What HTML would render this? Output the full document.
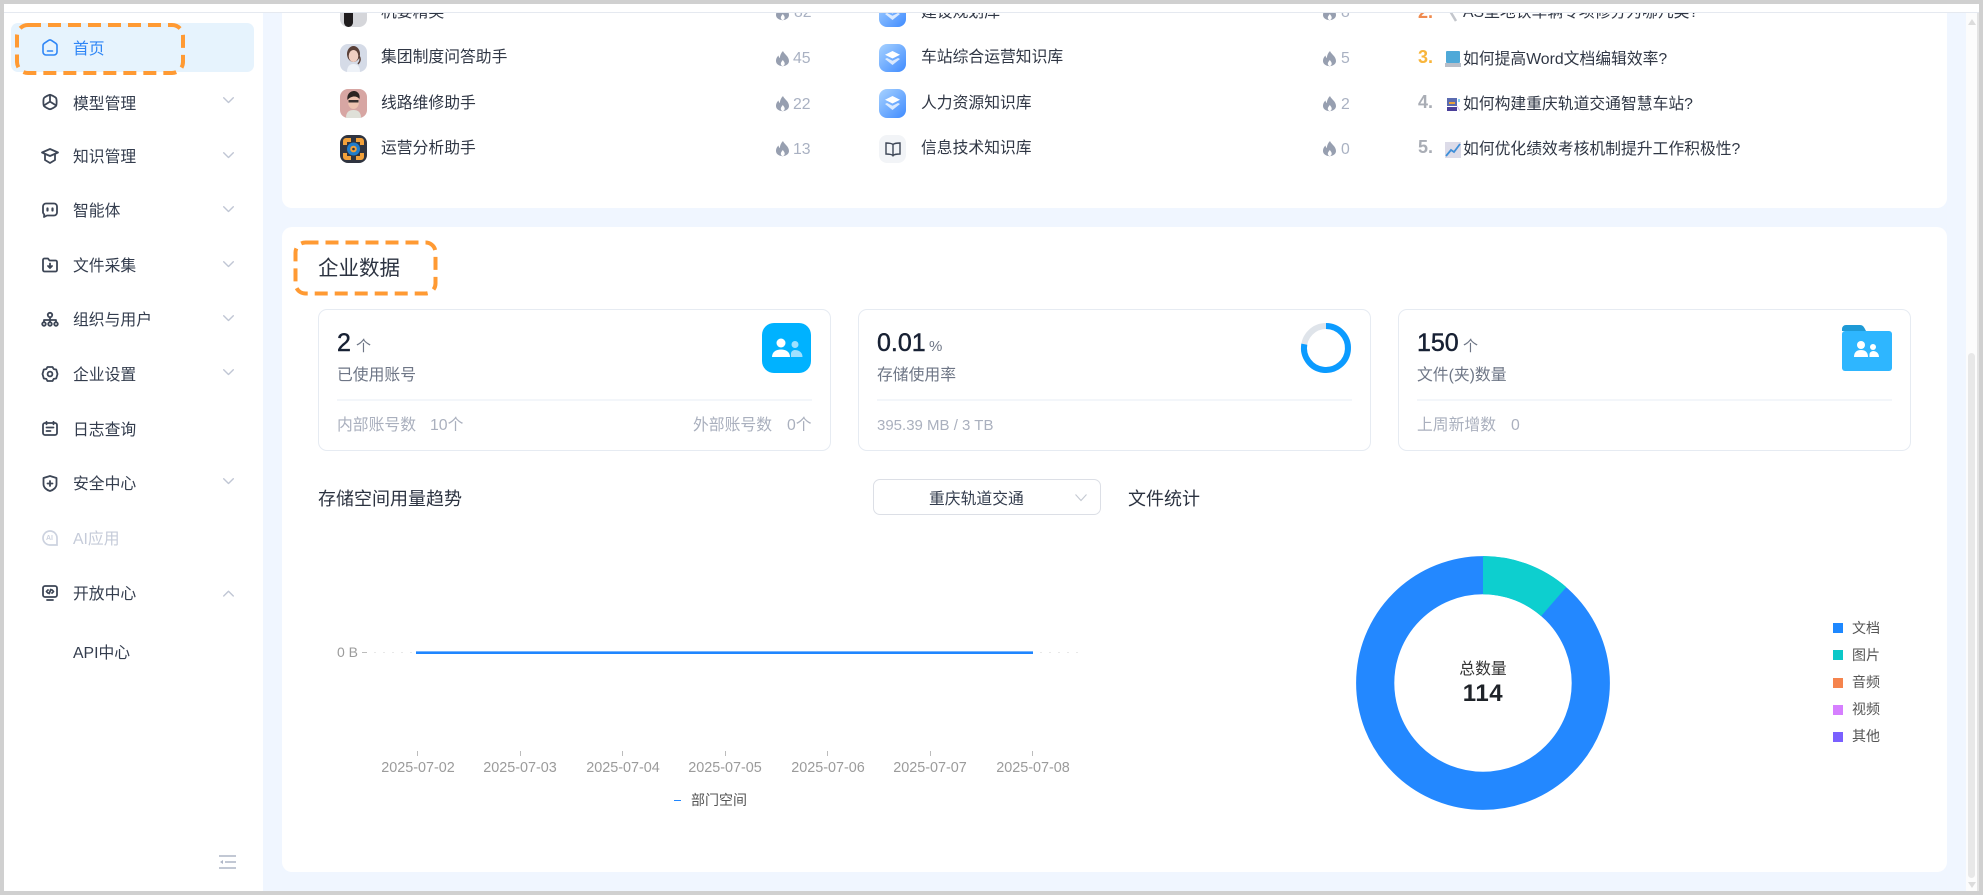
<!DOCTYPE html>
<html lang="zh">
<head>
<meta charset="utf-8">
<title>企业数据</title>
<style>
*{box-sizing:border-box;margin:0;padding:0}
html,body{width:1983px;height:895px;overflow:hidden;background:#d0d0d0}
body{position:relative;font-family:"Liberation Sans","Noto Sans CJK SC",sans-serif;color:#2b3240}
.a{position:absolute;white-space:nowrap}
.t{position:absolute;white-space:nowrap;height:24px;line-height:24px;font-size:15.8px;margin-top:1px}
svg{position:absolute;display:block;overflow:visible}
.t.menu{color:#333c4d;margin-top:2px}
.t.s{margin-top:2px}
.ic{fill:none;stroke:#3d4656;stroke-width:1.8;stroke-linecap:round;stroke-linejoin:round}
.chev{fill:none;stroke:#c0c6d4;stroke-width:1.4;stroke-linecap:round;stroke-linejoin:round}
.card{position:absolute;background:#fff;border:1px solid #e6ebf2;border-radius:9px;top:309px;height:142px;width:513px}
.g{color:#aab0be}
.s{color:#6e7686}
.row{color:#2f3644}
.num{color:#a9b1c2}
.big{position:absolute;white-space:nowrap;top:326px;font-size:25px;font-weight:500;line-height:34px;color:#172033;-webkit-text-stroke:.45px #172033}
.unit{position:absolute;white-space:nowrap;top:336px;font-size:15px;line-height:22px;color:#6e7686}
.rank{position:absolute;font-weight:700;font-size:18px;line-height:24px;height:24px}
.cl{fill:#979fb0}
.lg{position:absolute;left:1852px;font-size:14px;line-height:20px;height:20px;color:#555;white-space:nowrap}
.sq{position:absolute;left:1833px;width:10px;height:10px}
.xl{position:absolute;top:758px;width:80px;text-align:center;font-size:14.4px;line-height:20px;color:#9b9b9b;white-space:nowrap}
.xt{position:absolute;top:751px;width:1px;height:5px;background:#bcbcbc}
</style>
</head>
<body>
<!-- frame -->
<div class="a" style="left:4px;top:4px;width:1975px;height:887px;background:#f0f6ff"></div>
<!-- sidebar -->
<div class="a" style="left:4px;top:12px;width:259px;height:879px;background:#fff"></div>
<!-- cards -->
<div class="a" style="left:282px;top:12px;width:1665px;height:196px;background:#fff;border-radius:0 0 10px 10px"></div>
<div class="a" style="left:282px;top:227px;width:1665px;height:645px;background:#fff;border-radius:10px"></div>
<!-- scrollbar -->
<div class="a" style="left:1966px;top:12px;width:11px;height:879px;background:#fcfcfc"></div>
<div class="a" style="left:1968px;top:353px;width:7px;height:525px;background:#e8e8e8;border-radius:4px"></div>
<div class="a" style="left:1977px;top:4px;width:2px;height:887px;background:#e4e4e4"></div>
<svg style="left:1968px;top:19px" width="8" height="6"><path d="M0 6L4 0L8 6Z" fill="#dcdcdc"/></svg>
<svg style="left:1968px;top:882px" width="8" height="6"><path d="M0 0L4 6L8 0Z" fill="#dcdcdc"/></svg>

<!-- sidebar items -->
<div class="a" style="left:11px;top:23px;width:243px;height:49px;background:#e6f3fd;border-radius:7px"></div>
<svg class="a" style="left:13px;top:21px" width="175" height="55"><rect x="4" y="4" width="166" height="48" rx="11" fill="none" stroke="#ff9a33" stroke-width="4" stroke-dasharray="13 7"/></svg>

<svg style="left:42px;top:39px" width="16" height="17" viewBox="0 0 16 17"><path d="M1 6.500C1 5.500 1.500 4.800 2.200 4.300L6.500 1.400c1-.6 2-.6 3 0l4.300 2.900c.7.500 1.200 1.200 1.200 2.200V13a3 3 0 0 1-3 3H4a3 3 0 0 1-3-3z" fill="none" stroke="#2f86f6" stroke-width="1.600" stroke-linejoin="round"/><path d="M5.500 12h5" stroke="#2f86f6" stroke-width="1.600" stroke-linecap="round"/></svg>
<div class="t menu" style="left:73px;top:36px;color:#2f86f6">首页</div>

<svg class="ic" style="left:42px;top:94px" width="16" height="16" viewBox="0 0 16 16"><path d="M8 .8c1 0 5 2 6 3.200.8 1 .8 7 0 8-1 1.200-5 3.200-6 3.200s-5-2-6-3.200c-.8-1-.8-7 0-8C3 2.800 7 .8 8 .8z"/><path d="M8 1v6.600M8 7.600L2 11.400M8 7.600l6 3.800"/></svg>
<div class="t menu" style="left:73px;top:91px">模型管理</div>
<svg class="chev" style="left:223px;top:97px" width="11" height="7"><path d="M.7.7L5.500 5.500 10.300.7"/></svg>

<svg class="ic" style="left:41px;top:148px" width="18" height="16" viewBox="0 0 18 16"><path d="M1 4.500L9 1l8 3.500-8 3.500z"/><path d="M4 6.500V12l5 3 5-3V6.500"/></svg>
<div class="t menu" style="left:73px;top:144px">知识管理</div>
<svg class="chev" style="left:223px;top:152px" width="11" height="7"><path d="M.7.7L5.500 5.500 10.300.7"/></svg>

<svg class="ic" style="left:41px;top:202px" width="18" height="16" viewBox="0 0 18 16"><path d="M5 1.500h8a3 3 0 0 1 3 3v6a3 3 0 0 1-3 3H6l-3 1.500.3-2.500A3 3 0 0 1 2 10.500v-6a3 3 0 0 1 3-3z"/><path d="M6.500 6.500v2M11.500 6.500v2" stroke-width="2.200"/></svg>
<div class="t menu" style="left:73px;top:198px">智能体</div>
<svg class="chev" style="left:223px;top:206px" width="11" height="7"><path d="M.7.7L5.500 5.500 10.300.7"/></svg>

<svg class="ic" style="left:42px;top:257px" width="16" height="16" viewBox="0 0 16 16"><path d="M1 3a1.500 1.500 0 0 1 1.500-1.500H6l1.500 2h6A1.500 1.500 0 0 1 15 5v8a1.500 1.500 0 0 1-1.500 1.500h-11A1.500 1.500 0 0 1 1 13z"/><path d="M8 6.500v4M6 9l2 2 2-2"/></svg>
<div class="t menu" style="left:73px;top:253px">文件采集</div>
<svg class="chev" style="left:223px;top:261px" width="11" height="7"><path d="M.7.7L5.500 5.500 10.300.7"/></svg>

<svg class="ic" style="left:41px;top:312px" width="18" height="15" viewBox="0 0 18 15"><circle cx="9" cy="3" r="2.200"/><circle cx="3" cy="12" r="1.800"/><circle cx="9" cy="12" r="1.800"/><circle cx="15" cy="12" r="1.800"/><path d="M9 5.500v4.500M3 9.800V8h12v1.800"/></svg>
<div class="t menu" style="left:73px;top:307px">组织与用户</div>
<svg class="chev" style="left:223px;top:315px" width="11" height="7"><path d="M.7.7L5.500 5.500 10.300.7"/></svg>

<svg class="ic" style="left:42px;top:366px" width="16" height="16" viewBox="0 0 16 16"><path d="M5.500 1h5l1.200 2.100 2.500.4L15.500 8l-1.300 4.500-2.500.4L10.500 15h-5l-1.200-2.100-2.500-.4L.5 8l1.300-4.500 2.500-.4z"/><circle cx="8" cy="8" r="2.400"/></svg>
<div class="t menu" style="left:73px;top:362px">企业设置</div>
<svg class="chev" style="left:223px;top:369px" width="11" height="7"><path d="M.7.7L5.500 5.500 10.300.7"/></svg>

<svg class="ic" style="left:42px;top:421px" width="16" height="15" viewBox="0 0 16 15"><rect x="1" y="2" width="14" height="12" rx="2"/><path d="M4.500.8v2.500M11.500.8v2.500M4.500 6.500h7M4.500 10h4"/></svg>
<div class="t menu" style="left:73px;top:417px">日志查询</div>

<svg class="ic" style="left:42px;top:475px" width="16" height="17" viewBox="0 0 16 17"><path d="M8 1l6.500 2v6c0 3.500-3 6-6.500 7-3.500-1-6.500-3.500-6.500-7V3z"/><path d="M8 6v5M5.500 8.500h5"/></svg>
<div class="t menu" style="left:73px;top:471px">安全中心</div>
<svg class="chev" style="left:223px;top:478px" width="11" height="7"><path d="M.7.7L5.500 5.500 10.300.7"/></svg>

<svg style="left:42px;top:530px" width="16" height="16" viewBox="0 0 16 16" fill="none" stroke="#ccd2df" stroke-width="1.700"><path d="M8 1a7 7 0 1 0 0 14h7V8a7 7 0 0 0-7-7z"/></svg>
<div class="a" style="left:46px;top:534px;font-size:7px;font-weight:700;line-height:9px;color:#ccd2df">AI</div>
<div class="t menu" style="left:73px;top:526px;color:#c5cbd9">AI应用</div>

<svg class="ic" style="left:42px;top:585px" width="16" height="16" viewBox="0 0 16 16"><rect x="1" y="1" width="14" height="11" rx="2"/><path d="M5 15h6M6 5L4.500 6.500 6 8M10 5l1.500 1.500L10 8M8.700 4.500L7.300 8.500"/></svg>
<div class="t menu" style="left:73px;top:581px">开放中心</div>
<svg class="chev" style="left:223px;top:590px" width="11" height="7"><path d="M.7 6L5.500 1.200 10.300 6"/></svg>

<div class="t menu" style="left:73px;top:640px">API中心</div>

<svg style="left:219px;top:855px" width="17" height="14" viewBox="0 0 17 14" fill="none" stroke="#aeb5c6" stroke-width="1.500"><path d="M0 1h17M6 7h11M0 13h17"/><path d="M4 5v4L1 7z" fill="#aeb5c6" stroke="none"/></svg>

<!-- clipped top list -->
<div class="a" style="left:282px;top:13px;width:1665px;height:40px;overflow:hidden">
  <div class="a" style="top:-14px;left:58px;width:27px;height:28px;border-radius:8px;background:#d5d6da"></div>
  <div class="a" style="top:-11px;left:62px;width:9px;height:25px;border-radius:5px;background:#1f1c1d"></div>
  <div class="a" style="top:-12px;left:99px;font-size:15.8px;line-height:24px;color:#2f3644">机要精英</div>
  <svg style="left:494px;top:-8px" width="13" height="15" viewBox="0 0 13 15"><path class="cl" d="M7 0c1 3 6 5.200 6 10A6.500 5.200 0 0 1 0 10C0 7.500 1.200 5.700 2.500 4.500c.2 1.200.6 2 1.300 2.500C4 4.200 5 2 7 0z"/><path fill="#fff" d="M6.800 9c-1 1.300-2 2.400-2 3.700 0 1 .9 2.300 1.900 2.300s2-1.300 2-2.300C8.700 11.400 7.800 10.300 6.800 9z"/></svg>
  <div class="a num" style="left:512px;top:-12px;font-size:15.8px;line-height:24px">82</div>

  <div class="a" style="top:-14px;left:597px;width:27px;height:28px;border-radius:8px;background:linear-gradient(135deg,#a8d2ff,#3f8bff)"></div>
  <svg style="left:603px;top:-7px" width="15" height="14" viewBox="0 0 15 14"><path d="M7.500 0L15 3.700 7.500 7.500 0 3.700z" fill="#fff"/><path d="M2 7l5.500 2.700L13 7l2 1-7.500 6L0 8z" fill="#fff" opacity=".75"/></svg>
  <div class="a" style="top:-12px;left:639px;font-size:15.8px;line-height:24px;color:#2f3644">建设规划库</div>
  <svg style="left:1041px;top:-8px" width="13" height="15" viewBox="0 0 13 15"><path class="cl" d="M7 0c1 3 6 5.200 6 10A6.500 5.200 0 0 1 0 10C0 7.500 1.200 5.700 2.500 4.500c.2 1.200.6 2 1.300 2.500C4 4.200 5 2 7 0z"/><path fill="#fff" d="M6.800 9c-1 1.300-2 2.400-2 3.700 0 1 .9 2.300 1.900 2.300s2-1.300 2-2.300C8.700 11.400 7.800 10.300 6.800 9z"/></svg>
  <div class="a num" style="left:1059px;top:-12px;font-size:15.8px;line-height:24px">8</div>

  <div class="rank" style="left:1136px;top:-13px;color:#ef8a4e">2.</div>
  <svg style="left:1163px;top:-9px" width="14" height="18" viewBox="0 0 14 18"><path d="M2 2l9 15" stroke="#c3c6cc" stroke-width="2.500" fill="none"/></svg>
  <div class="a" style="left:1181px;top:-12px;font-size:15.8px;line-height:24px;color:#2f3644">AS型地铁车辆专项修分为哪几类?</div>
</div>
<div class="a" style="left:4px;top:4px;width:1975px;height:8px;background:#fff"></div>
<div class="a" style="left:4px;top:12px;width:1975px;height:1px;background:#e5e9f0"></div>
<div class="a" style="left:0;top:0;width:1983px;height:4px;background:#d0d0d0"></div>

<!-- row avatars col 1 -->
<svg style="left:340px;top:44px" width="27" height="28" viewBox="0 0 27 28"><rect width="27" height="28" rx="8" fill="#d5dbe7"/><path d="M7 28c0-6 3-8 6.500-8S20 22 20 28z" fill="#eef2f8"/><ellipse cx="13.500" cy="10" rx="6.500" ry="8" fill="#5a4038"/><ellipse cx="13.500" cy="12" rx="4.800" ry="6" fill="#f0cfc2"/><path d="M19 12c2 3 1 6-1 8" stroke="#5a4038" stroke-width="1.500" fill="none"/></svg>
<div class="t row" style="left:381px;top:45px">集团制度问答助手</div>
<svg style="left:340px;top:89px" width="27" height="29" viewBox="0 0 27 29"><rect width="27" height="29" rx="8" fill="#d7a6a3"/><path d="M6 29c0-6 3-8 7.500-8S21 23 21 29z" fill="#dfe0d8"/><ellipse cx="13.500" cy="13" rx="5.500" ry="7" fill="#eec3b0"/><path d="M7.500 11c-1-7 4-9 6.500-9s6.500 2 5.500 8c-2-3-8-4-12 1z" fill="#2b2422"/><rect x="8.500" y="11" width="10" height="2.500" fill="#3a3030"/></svg>
<div class="t row" style="left:381px;top:91px">线路维修助手</div>
<svg style="left:340px;top:135px" width="27" height="28" viewBox="0 0 27 28"><rect width="27" height="28" rx="8" fill="#2f3440"/><path d="M3 10V6a3 3 0 0 1 3-3h5v4H7v3zM24 10V6a3 3 0 0 0-3-3h-5v4h4v3zM3 18v4a3 3 0 0 0 3 3h5v-4H7v-3zM24 18v4a3 3 0 0 1-3 3h-5v-4h4v-3z" fill="#f2a13a"/><circle cx="13.500" cy="14" r="6.500" fill="#1f7dcc"/><circle cx="13.500" cy="14" r="3.300" fill="#f2a13a"/><circle cx="13.500" cy="14" r="1.300" fill="#2f3440"/></svg>
<div class="t row" style="left:381px;top:136px">运营分析助手</div>

<svg style="left:776px;top:51px" width="13" height="15" viewBox="0 0 13 15"><path class="cl" d="M7 0c1 3 6 5.200 6 10A6.500 5.200 0 0 1 0 10C0 7.500 1.200 5.700 2.500 4.500c.2 1.200.6 2 1.300 2.500C4 4.200 5 2 7 0z"/><path fill="#fff" d="M6.800 9c-1 1.300-2 2.400-2 3.700 0 1 .9 2.300 1.900 2.300s2-1.300 2-2.300C8.700 11.400 7.800 10.300 6.800 9z"/></svg>
<div class="t num" style="left:793px;top:46px">45</div>
<svg style="left:776px;top:96px" width="13" height="15" viewBox="0 0 13 15"><path class="cl" d="M7 0c1 3 6 5.200 6 10A6.500 5.200 0 0 1 0 10C0 7.500 1.200 5.700 2.500 4.500c.2 1.200.6 2 1.300 2.500C4 4.200 5 2 7 0z"/><path fill="#fff" d="M6.800 9c-1 1.300-2 2.400-2 3.700 0 1 .9 2.300 1.900 2.300s2-1.300 2-2.300C8.700 11.400 7.800 10.300 6.800 9z"/></svg>
<div class="t num" style="left:793px;top:92px">22</div>
<svg style="left:776px;top:141px" width="13" height="15" viewBox="0 0 13 15"><path class="cl" d="M7 0c1 3 6 5.200 6 10A6.500 5.200 0 0 1 0 10C0 7.500 1.200 5.700 2.500 4.500c.2 1.200.6 2 1.300 2.500C4 4.200 5 2 7 0z"/><path fill="#fff" d="M6.800 9c-1 1.300-2 2.400-2 3.700 0 1 .9 2.300 1.900 2.300s2-1.300 2-2.300C8.700 11.400 7.800 10.300 6.800 9z"/></svg>
<div class="t num" style="left:793px;top:137px">13</div>

<!-- col 2 -->
<div class="a" style="left:879px;top:44px;width:27px;height:28px;border-radius:8px;background:linear-gradient(135deg,#a8d2ff,#3f8bff)"></div>
<svg style="left:885px;top:51px" width="15" height="14" viewBox="0 0 15 14"><path d="M7.500 0L15 3.700 7.500 7.500 0 3.700z" fill="#fff"/><path d="M2 7l5.500 2.700L13 7l2 1-7.500 6L0 8z" fill="#fff" opacity=".75"/></svg>
<div class="t row" style="left:921px;top:45px">车站综合运营知识库</div>
<div class="a" style="left:879px;top:89px;width:27px;height:29px;border-radius:8px;background:linear-gradient(135deg,#a8d2ff,#3f8bff)"></div>
<svg style="left:885px;top:96px" width="15" height="14" viewBox="0 0 15 14"><path d="M7.500 0L15 3.700 7.500 7.500 0 3.700z" fill="#fff"/><path d="M2 7l5.500 2.700L13 7l2 1-7.500 6L0 8z" fill="#fff" opacity=".75"/></svg>
<div class="t row" style="left:921px;top:91px">人力资源知识库</div>
<div class="a" style="left:879px;top:135px;width:27px;height:28px;border-radius:8px;background:#f2f4f7"></div>
<svg style="left:885px;top:142px" width="16" height="15" viewBox="0 0 16 15" fill="none" stroke="#3d4656" stroke-width="1.400"><path d="M8 2.500C6.500 1 3.500 1 1 1v11c2.500 0 5.500 0 7 1.500 1.500-1.500 4.500-1.500 7-1.500V1c-2.500 0-5.500 0-7 1.500zM8 2.500v12"/></svg>
<div class="t row" style="left:921px;top:136px">信息技术知识库</div>

<svg style="left:1323px;top:51px" width="13" height="15" viewBox="0 0 13 15"><path class="cl" d="M7 0c1 3 6 5.200 6 10A6.500 5.200 0 0 1 0 10C0 7.500 1.200 5.700 2.500 4.500c.2 1.200.6 2 1.300 2.500C4 4.200 5 2 7 0z"/><path fill="#fff" d="M6.800 9c-1 1.300-2 2.400-2 3.700 0 1 .9 2.300 1.900 2.300s2-1.300 2-2.300C8.700 11.400 7.800 10.300 6.800 9z"/></svg>
<div class="t num" style="left:1341px;top:46px">5</div>
<svg style="left:1323px;top:96px" width="13" height="15" viewBox="0 0 13 15"><path class="cl" d="M7 0c1 3 6 5.200 6 10A6.500 5.200 0 0 1 0 10C0 7.500 1.200 5.700 2.500 4.500c.2 1.200.6 2 1.300 2.500C4 4.200 5 2 7 0z"/><path fill="#fff" d="M6.800 9c-1 1.300-2 2.400-2 3.700 0 1 .9 2.300 1.900 2.300s2-1.300 2-2.300C8.700 11.400 7.800 10.300 6.800 9z"/></svg>
<div class="t num" style="left:1341px;top:92px">2</div>
<svg style="left:1323px;top:141px" width="13" height="15" viewBox="0 0 13 15"><path class="cl" d="M7 0c1 3 6 5.200 6 10A6.500 5.200 0 0 1 0 10C0 7.500 1.200 5.700 2.500 4.500c.2 1.200.6 2 1.300 2.500C4 4.200 5 2 7 0z"/><path fill="#fff" d="M6.800 9c-1 1.300-2 2.400-2 3.700 0 1 .9 2.300 1.900 2.300s2-1.300 2-2.300C8.700 11.400 7.800 10.300 6.800 9z"/></svg>
<div class="t num" style="left:1341px;top:137px">0</div>

<!-- col 3 -->
<div class="rank" style="left:1418px;top:45px;color:#f8b53b">3.</div>
<svg style="left:1445px;top:51px" width="16" height="16" viewBox="0 0 16 16"><rect x="1" y="0" width="14" height="12" rx="1" fill="#4fa9d8"/><rect x="0" y="12" width="16" height="4" fill="#b9bec8"/></svg>
<div class="t row" style="left:1463px;top:47px">如何提高Word文档编辑效率?</div>
<div class="rank" style="left:1418px;top:90px;color:#a9adb5">4.</div>
<svg style="left:1446px;top:97px" width="15" height="15" viewBox="0 0 15 15"><rect x="1" y="1" width="10" height="8" fill="#5b6bb0"/><rect x="1" y="10" width="10" height="4" fill="#4a3f9a"/><rect x="3" y="5" width="6" height="2" fill="#e8a23b"/><rect x="12" y="2" width="2" height="3" fill="#8ed0f0"/><path d="M11 9l3 5" stroke="#d8c8f0"/></svg>
<div class="t row" style="left:1463px;top:92px">如何构建重庆轨道交通智慧车站?</div>
<div class="rank" style="left:1418px;top:135px;color:#a9adb5">5.</div>
<svg style="left:1445px;top:142px" width="16" height="16" viewBox="0 0 16 16"><rect width="16" height="16" fill="#dcdbe8"/><path d="M1 14l5-6 3 2 6-8" fill="none" stroke="#3f8fd8" stroke-width="1.800"/></svg>
<div class="t row" style="left:1463px;top:137px">如何优化绩效考核机制提升工作积极性?</div>

<!-- heading -->
<svg style="left:292px;top:239px" width="147" height="58"><rect x="3.500" y="3.500" width="140" height="51" rx="10" fill="none" stroke="#ff9a33" stroke-width="4" stroke-dasharray="13 7"/></svg>
<div class="a" style="left:318px;top:254px;font-size:20.5px;line-height:30px;color:#2b3240">企业数据</div>

<!-- stat cards -->
<div class="card" style="left:318px"></div>
<div class="card" style="left:858px"></div>
<div class="card" style="left:1398px"></div>

<div class="big" style="left:337px">2</div>
<div class="unit" style="left:356px">个</div>
<div class="t s" style="left:337px;top:362px">已使用账号</div>
<div class="a" style="left:337px;top:399px;width:475px;height:2px;background:#f3f6fa"></div>
<div class="t g" style="left:337px;top:413px">内部账号数</div>
<div class="t g" style="left:430px;top:413px">10个</div>
<div class="t g" style="left:693px;top:413px">外部账号数</div>
<div class="t g" style="left:787px;top:413px">0个</div>
<div class="a" style="left:762px;top:323px;width:49px;height:50px;border-radius:12px;background:#00b2ff"></div>
<svg style="left:771px;top:338px" width="32" height="20" viewBox="0 0 32 20"><circle cx="10" cy="5" r="4.500" fill="#fff"/><path d="M1 19c0-5 4-7.500 9-7.500s9 2.500 9 7.500z" fill="#fff"/><circle cx="24" cy="6.500" r="3.500" fill="#9ee0ff"/><path d="M20 19c0-4-.5-6 3.500-7 4 0 8 2 8 7z" fill="#9ee0ff"/></svg>

<div class="big" style="left:877px">0.01</div>
<div class="unit" style="left:929px">%</div>
<div class="t s" style="left:877px;top:362px">存储使用率</div>
<div class="a" style="left:877px;top:399px;width:475px;height:2px;background:#f3f6fa"></div>
<div class="t g" style="left:877px;top:413px;font-size:15px">395.39 MB / 3 TB</div>
<svg style="left:1301px;top:323px" width="50" height="50" viewBox="0 0 50 50"><circle cx="25" cy="25" r="22" fill="none" stroke="#dfe4ea" stroke-width="6"/><path d="M25 3A22 22 0 1 1 3.300 21.200" fill="none" stroke="#0b9bff" stroke-width="6"/></svg>

<div class="big" style="left:1417px">150</div>
<div class="unit" style="left:1463px">个</div>
<div class="t s" style="left:1417px;top:362px">文件(夹)数量</div>
<div class="a" style="left:1417px;top:399px;width:475px;height:2px;background:#f3f6fa"></div>
<div class="t g" style="left:1417px;top:413px">上周新增数</div>
<div class="t g" style="left:1511px;top:413px">0</div>
<svg style="left:1842px;top:325px" width="50" height="46" viewBox="0 0 50 46"><path d="M0 4a4 4 0 0 1 4-4h14c3 0 4 2 6 6h-24z" fill="#1e9ad6"/><rect y="6" width="50" height="40" rx="3" fill="#2eb6ff"/><circle cx="19" cy="20" r="4" fill="#fff"/><path d="M12 32c0-5 3-7 7-7s7 2 7 7z" fill="#fff"/><circle cx="31" cy="22" r="3" fill="#fff"/><path d="M27.500 32c0-3-.5-5 3.500-6 3 0 6 2 6 6z" fill="#fff"/></svg>

<!-- section titles -->
<div class="a" style="left:318px;top:486px;font-size:18px;line-height:26px;color:#2b3240">存储空间用量趋势</div>
<div class="a" style="left:873px;top:479px;width:228px;height:36px;border:1px solid #dcdfe6;border-radius:7px;background:#fff"></div>
<div class="t" style="left:929px;top:487px;color:#333c4d">重庆轨道交通</div>
<svg style="left:1075px;top:494px" width="12" height="7"><path d="M.5.5L6 6.500 11.500.5" fill="none" stroke="#c4c9d2" stroke-width="1.100"/></svg>
<div class="a" style="left:1128px;top:486px;font-size:18px;line-height:26px;color:#2b3240">文件统计</div>

<!-- line chart -->
<div class="a" style="left:337px;top:642px;font-size:14px;line-height:20px;color:#9b9b9b">0 B</div>
<div class="a" style="left:362px;top:652px;width:5px;height:1px;background:#bcbcbc"></div>
<div class="a" style="left:374px;top:652px;width:709px;height:1px;background-image:repeating-linear-gradient(90deg,#e8e8e8 0 2px,transparent 2px 9px)"></div>
<div class="a" style="left:416px;top:651px;width:617px;height:3px;background:#1f86ff;border-top:1px solid #74b3ff"></div>
<div class="xt" style="left:417px"></div><div class="xt" style="left:520px"></div><div class="xt" style="left:622px"></div><div class="xt" style="left:725px"></div><div class="xt" style="left:827px"></div><div class="xt" style="left:930px"></div><div class="xt" style="left:1032px"></div>
<div class="xl" style="left:378px">2025-07-02</div>
<div class="xl" style="left:480px">2025-07-03</div>
<div class="xl" style="left:583px">2025-07-04</div>
<div class="xl" style="left:685px">2025-07-05</div>
<div class="xl" style="left:788px">2025-07-06</div>
<div class="xl" style="left:890px">2025-07-07</div>
<div class="xl" style="left:993px">2025-07-08</div>
<div class="a" style="left:674px;top:800px;width:7px;height:1px;background:#1f86ff"></div>
<div class="a" style="left:691px;top:790px;font-size:14px;line-height:20px;color:#555">部门空间</div>

<!-- donut -->
<svg style="left:1356px;top:556px" width="254" height="254" viewBox="-127 -127 254 254">
<circle r="107.800" fill="none" stroke="#2388ff" stroke-width="38.200"/>
<path d="M0-127A127 127 0 0 1 83.300-95.900L58.100-66.900A88.800 88.800 0 0 0 0-88.800Z" fill="#0dcfcf"/>
</svg>
<div class="a" style="left:1433px;top:659px;width:100px;text-align:center;font-size:15.800px;line-height:22px;color:#333">总数量</div>
<div class="a" style="left:1433px;top:677px;width:100px;text-align:center;font-size:24px;font-weight:700;line-height:34px;letter-spacing:.6px;color:#1f2329">114</div>

<div class="sq" style="top:623px;background:#1e88ff"></div><div class="lg" style="top:618px">文档</div>
<div class="sq" style="top:650px;background:#0bc8c8"></div><div class="lg" style="top:645px">图片</div>
<div class="sq" style="top:678px;background:#f5844d"></div><div class="lg" style="top:672px">音频</div>
<div class="sq" style="top:705px;background:#d67fff"></div><div class="lg" style="top:699px">视频</div>
<div class="sq" style="top:732px;background:#7a60ff"></div><div class="lg" style="top:726px">其他</div>
</body>
</html>
